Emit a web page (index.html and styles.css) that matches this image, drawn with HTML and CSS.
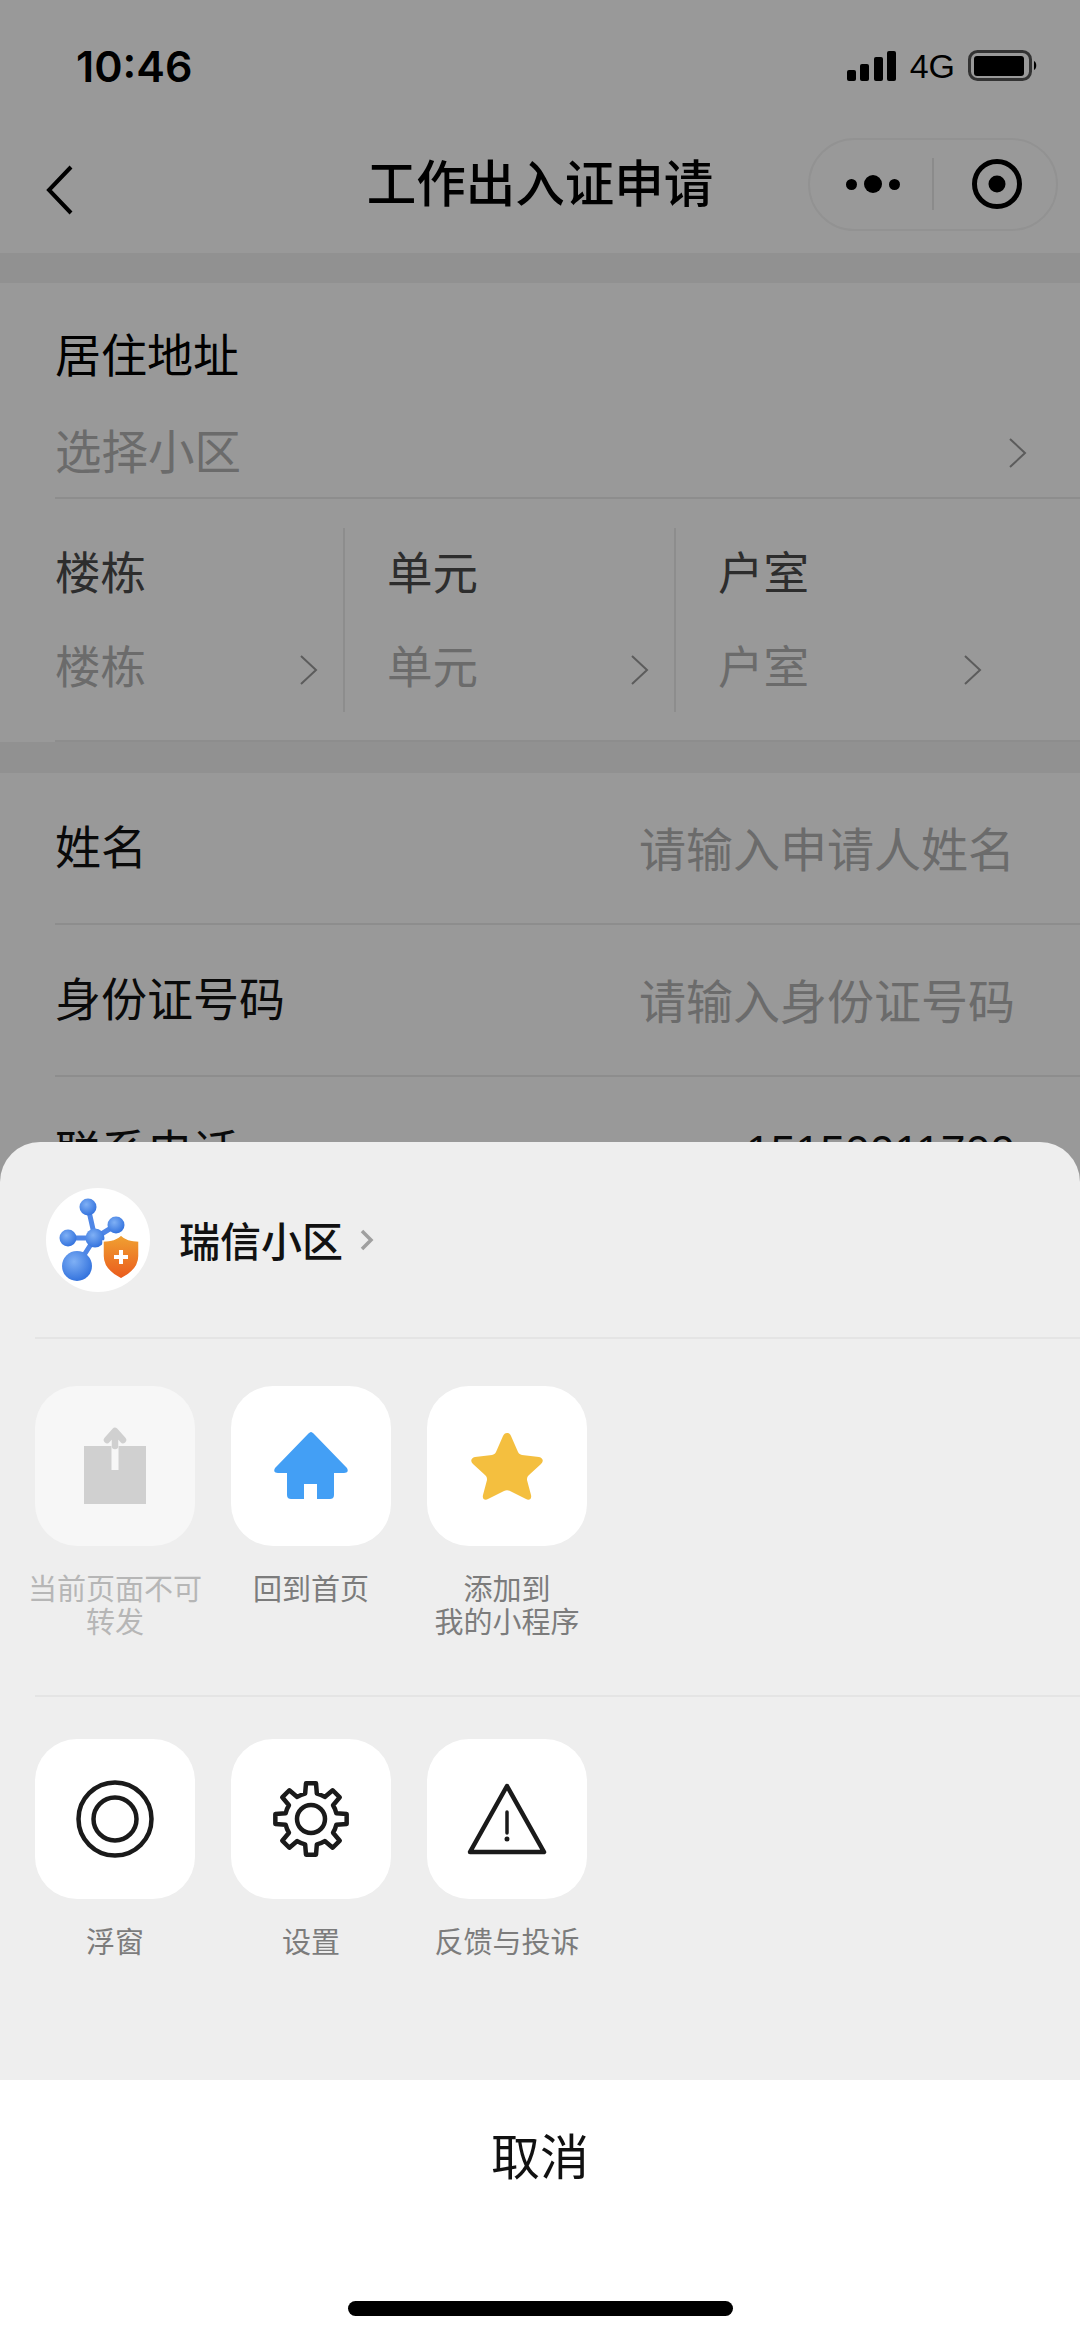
FILE: index.html

```html
<!DOCTYPE html>
<html>
<head>
  <meta charset="utf-8">
  <title>工作出入证申请</title>
  <link rel="stylesheet" href="styles.css">
</head>
<body>
  <div class="page">
    <div class="status">
      <span class="time">10:46</span>
      <div class="status-right">
        <svg class="signal" width="50" height="32" viewBox="0 0 50 32">
          <rect x="0" y="20" width="9" height="11" rx="2"/>
          <rect x="13" y="14" width="9" height="17" rx="2"/>
          <rect x="27" y="7" width="9" height="24" rx="2"/>
          <rect x="40" y="1" width="9" height="30" rx="2"/>
        </svg>
        <span class="net">4G</span>
        <svg class="battery" width="70" height="32" viewBox="0 0 70 32">
          <rect x="1.5" y="1.5" width="61" height="28" rx="8" fill="none" stroke="#555" stroke-width="3"/>
          <rect x="6" y="6" width="50" height="20" rx="3"/>
          <path d="M66 11 C69 12 69 19 66 20 Z"/>
        </svg>
      </div>
    </div>

    <div class="nav">
      <svg class="back" width="30" height="70" viewBox="0 0 30 70">
        <path d="M26 12 L4 35 L26 58" fill="none" stroke="#000" stroke-width="4"/>
      </svg>
      <div class="nav-title">工作出入证申请</div>
      <div class="capsule">
        <div class="capsule-dots"><i></i><i class="big"></i><i></i></div>
        <svg class="capsule-target" width="50" height="50" viewBox="0 0 50 50">
          <circle cx="25" cy="25" r="22.5" fill="none" stroke="#000" stroke-width="5"/>
          <circle cx="25" cy="25" r="8.5"/>
        </svg>
      </div>
    </div>

    <div class="band"></div>

    <div class="addr-title">居住地址</div>
    <div class="addr-select">
      <span class="ph">选择小区</span>
      <svg class="chev" width="20" height="32" viewBox="0 0 20 32"><path d="M2 2 L17 16 L2 30"/></svg>
    </div>

    <div class="units">
      <div class="unit">
        <div class="unit-label">楼栋</div>
        <div class="unit-value">
          <span class="ph">楼栋</span>
          <svg class="chev" width="20" height="32" viewBox="0 0 20 32"><path d="M2 2 L17 16 L2 30"/></svg>
        </div>
      </div>
      <div class="unit">
        <div class="unit-label">单元</div>
        <div class="unit-value">
          <span class="ph">单元</span>
          <svg class="chev" width="20" height="32" viewBox="0 0 20 32"><path d="M2 2 L17 16 L2 30"/></svg>
        </div>
      </div>
      <div class="unit last">
        <div class="unit-label">户室</div>
        <div class="unit-value">
          <span class="ph">户室</span>
          <svg class="chev" width="20" height="32" viewBox="0 0 20 32"><path d="M2 2 L17 16 L2 30"/></svg>
        </div>
      </div>
    </div>

    <div class="band band-2"></div>

    <div class="field"><span>姓名</span><span class="ph">请输入申请人姓名</span></div>
    <div class="field"><span>身份证号码</span><span class="ph">请输入身份证号码</span></div>
    <div class="field"><span>联系电话</span><span class="phone">15150011700</span></div>
  </div>

  <div class="scrim"></div>

  <div class="sheet">
    <div class="sheet-head">
      <svg class="logo" width="104" height="104" viewBox="0 0 104 104">
        <defs>
          <radialGradient id="ball" cx="40%" cy="35%" r="70%">
            <stop offset="0" stop-color="#7fb0f5"/>
            <stop offset="1" stop-color="#2f6fdc"/>
          </radialGradient>
          <linearGradient id="shield" x1="0" y1="0" x2="0" y2="1">
            <stop offset="0" stop-color="#f0a232"/>
            <stop offset="1" stop-color="#ea5a1c"/>
          </linearGradient>
        </defs>
        <circle cx="52" cy="52" r="52" fill="#fff"/>
        <path d="M42 19 L49 50 M70 37 L49 50 M22 50 L49 50 M31 78 L49 50" stroke="#4f86e6" stroke-width="5" fill="none"/>
        <circle cx="42" cy="19" r="8.5" fill="url(#ball)"/>
        <circle cx="70" cy="37" r="8.5" fill="url(#ball)"/>
        <circle cx="22" cy="50" r="8.5" fill="url(#ball)"/>
        <circle cx="49" cy="50" r="9.5" fill="url(#ball)"/>
        <circle cx="31" cy="78" r="15" fill="url(#ball)"/>
        <path d="M75 47 C80 52 87 53 93 53 L93 68 C93 78 85 86 75 91 C65 86 57 78 57 68 L57 53 C63 53 70 52 75 47 Z" fill="url(#shield)" stroke="#fff" stroke-width="1.5"/>
        <path d="M75 62 L75 76 M68 69 L82 69" stroke="#fff" stroke-width="4" fill="none"/>
      </svg>
      <span class="sheet-name">瑞信小区</span>
      <svg class="sheet-chev" width="14" height="22" viewBox="0 0 14 22"><path d="M2 2 L11 11 L2 20"/></svg>
    </div>

    <div class="sheet-row first">
      <div class="item off">
        <div class="tile">
          <svg width="70" height="84" viewBox="0 0 70 84">
            <path d="M4 22 H66 V80 H4 Z" fill="#d0d0d0"/>
            <rect x="31.5" y="22" width="7" height="24" fill="#f7f7f7"/>
            <path d="M35 8 V22 M27 16 L35 7 L43 16" fill="none" stroke="#d0d0d0" stroke-width="6.5" stroke-linejoin="round" stroke-linecap="round"/>
          </svg>
        </div>
        <div class="item-label">当前页面不可<br>转发</div>
      </div>
      <div class="item">
        <div class="tile">
          <svg width="76" height="70" viewBox="0 0 76 70">
            <path d="M38 1 C39 1 40 2 41 3 L73 36 C76 39 75 42 71 42 L61 42 V64 C61 67 59 68 57 68 H44 V53 H31 V68 H18 C16 68 14 67 14 64 V42 L5 42 C1 42 0 39 3 36 L35 3 C36 2 37 1 38 1 Z" fill="#439ff5"/>
          </svg>
        </div>
        <div class="item-label">回到首页</div>
      </div>
      <div class="item">
        <div class="tile">
          <svg width="74" height="70" viewBox="0 0 74 70">
            <path d="M37 2 C39 2 40 3 41 5 L48 21 C49 23 50 23 52 24 L69 26 C73 27 74 30 71 33 L59 44 C57 46 57 47 57 49 L61 64 C62 68 59 70 56 68 L40 60 C38 59 36 59 34 60 L18 68 C15 70 12 68 13 64 L17 49 C17 47 17 46 15 44 L3 33 C0 30 1 27 5 26 L22 24 C24 23 25 23 26 21 L33 5 C34 3 35 2 37 2 Z" fill="#f4bf3f"/>
          </svg>
        </div>
        <div class="item-label">添加到<br>我的小程序</div>
      </div>
    </div>

    <div class="sheet-row">
      <div class="item">
        <div class="tile">
          <svg width="80" height="80" viewBox="0 0 80 80" class="line-icon">
            <circle cx="40" cy="40" r="36.5"/>
            <circle cx="40" cy="40" r="21.5"/>
          </svg>
        </div>
        <div class="item-label">浮窗</div>
      </div>
      <div class="item">
        <div class="tile">
          <svg width="80" height="80" viewBox="-40 -40 80 80" class="line-icon">
            <path d="M-5.85 -25.33 L-5.01 -35.65 H5.01 L5.85 -25.33 A26 26 0 0 1 13.78 -22.05 L21.67 -28.75 L28.75 -21.67 L22.05 -13.78 A26 26 0 0 1 25.33 -5.85 L35.65 -5.01 V5.01 L25.33 5.85 A26 26 0 0 1 22.05 13.78 L28.75 21.67 L21.67 28.75 L13.78 22.05 A26 26 0 0 1 5.85 25.33 L5.01 35.65 H-5.01 L-5.85 25.33 A26 26 0 0 1 -13.78 22.05 L-21.67 28.75 L-28.75 21.67 L-22.05 13.78 A26 26 0 0 1 -25.33 5.85 L-35.65 5.01 V-5.01 L-25.33 -5.85 A26 26 0 0 1 -22.05 -13.78 L-28.75 -21.67 L-21.67 -28.75 L-13.78 -22.05 A26 26 0 0 1 -5.85 -25.33 Z"/>
            <circle cx="0" cy="0" r="14"/>
          </svg>
        </div>
        <div class="item-label">设置</div>
      </div>
      <div class="item">
        <div class="tile">
          <svg width="80" height="72" viewBox="0 0 80 72" class="line-icon">
            <path d="M40 3 L77 69 H3 Z"/>
            <path d="M40 29 V50" stroke-width="3.5"/>
            <circle cx="40" cy="56" r="2.5" fill="#1a1a1a" stroke="none"/>
          </svg>
        </div>
        <div class="item-label">反馈与投诉</div>
      </div>
    </div>

    <div class="cancel-wrap">
      <div class="cancel">取消</div>
      <div class="home-bar"></div>
    </div>
  </div>
</body>
</html>
```

FILE: styles.css

```css
* { box-sizing: border-box; }
html, body { margin: 0; padding: 0; }
body { position: relative; width: 1080px; height: 2339px; overflow: hidden; background: #fff; color: #000; font-family: "Noto Sans CJK SC", "Noto Sans", sans-serif; }

.page { width: 1080px; }
.ph { color: #b2b2b2; }

.status { height: 132px; display: flex; align-items: center; justify-content: space-between; padding: 0 42px 0 76px; }
.time { font-family: Inter, Roboto, sans-serif; font-size: 43px; font-weight: 600; }
.status-right { display: flex; align-items: center; }
.signal { margin-right: 13px; }
.net { font-family: "Liberation Sans", sans-serif; font-size: 34px; margin-right: 13px; }

.nav { height: 121px; display: grid; grid-template-columns: 1fr auto 1fr; align-items: center; padding-bottom: 17px; }
.back { margin: 12px 0 0 45px; }
.nav-title { font-size: 49.5px; font-weight: 500; line-height: 60px; padding-bottom: 6px; }
.capsule { justify-self: end; margin-right: 22px; width: 250px; height: 93px; border: 2px solid #f4f4f4; border-radius: 47px; display: grid; grid-template-columns: 124px 1fr; align-items: center; justify-items: center; }
.capsule-dots { display: flex; align-items: center; gap: 7px; height: 52px; width: 100%; padding-left: 4px; justify-content: center; border-right: 2px solid #e8e8e8; }
.capsule-dots i { width: 11px; height: 11px; border-radius: 50%; background: #000; }
.capsule-dots i.big { width: 18px; height: 18px; }
.capsule-target { margin-left: 3px; }

.band { height: 30px; background: #f2f2f2; }
.band-2 { height: 31px; }

.addr-title { height: 144px; padding-left: 55px; font-size: 46px; line-height: 138px; }
.addr-select { height: 72px; margin-left: 55px; padding: 0 52px 28px 0; border-bottom: 2px solid #ececec; display: flex; align-items: center; justify-content: space-between; font-size: 46.5px; }
.chev { fill: none; stroke: #999; stroke-width: 2; flex-shrink: 0; margin-top: 10px; }

.units { height: 243px; margin-left: 55px; padding-top: 29px; border-bottom: 2px solid #ececec; display: grid; grid-template-columns: 290px 331px 331px; align-items: start; }
.unit { height: 184px; padding-left: 42px; padding-right: 24px; border-right: 2px solid #ececec; }
.unit:first-child { padding-left: 0; }
.unit.last { border-right: none; }
.unit-label { height: 84px; line-height: 84px; font-size: 45.5px; color: #4c4c4c; white-space: nowrap; }
.unit-value { height: 76px; margin-top: 14px; display: flex; align-items: center; justify-content: space-between; font-size: 45.5px; white-space: nowrap; }
.unit-value .chev { margin-top: 12px; }

.field { height: 152px; margin-left: 55px; padding: 0 65px 8px 0; border-bottom: 2px solid #ececec; display: flex; align-items: center; justify-content: space-between; font-size: 46px; color: #111; }
.field .ph { font-size: 47px; padding-top: 4px; }
.phone { font-family: "Liberation Sans", sans-serif; font-size: 44.5px; padding-top: 8px; }

.scrim { position: absolute; inset: 0; background: rgba(0, 0, 0, 0.4); }

.sheet { position: absolute; left: 0; right: 0; top: 1142px; bottom: 0; background: #eee; border-radius: 40px 40px 0 0; display: flex; flex-direction: column; overflow: hidden; }
.sheet-head { height: 197px; margin-left: 35px; padding-left: 11px; border-bottom: 2px solid #e4e4e4; display: flex; align-items: center; flex-shrink: 0; }
.sheet-name { margin-left: 29px; font-size: 41px; font-weight: 500; color: #111; padding-bottom: 2px; }
.sheet-chev { margin-left: 17px; fill: none; stroke: #a0a0a0; stroke-width: 3.5; }

.sheet-row { flex: 1; margin-left: 35px; padding-top: 42px; display: flex; gap: 36px; align-items: flex-start; }
.sheet-row.first { flex: none; height: 358px; padding-top: 47px; border-bottom: 2px solid #e4e4e4; }
.item { width: 160px; display: flex; flex-direction: column; align-items: center; }
.tile { width: 160px; height: 160px; border-radius: 42px; background: #fff; display: flex; align-items: center; justify-content: center; }
.item-label { margin-top: 25px; font-size: 29px; line-height: 33px; color: #7c7c7c; text-align: center; white-space: nowrap; }
.item.off .tile { background: #f7f7f7; }
.item.off .item-label { color: #b6b6b6; }
.line-icon { fill: none; stroke: #1a1a1a; stroke-width: 4.5; stroke-linejoin: round; stroke-linecap: round; }

.cancel-wrap { height: 259px; background: #fff; display: flex; flex-direction: column; align-items: center; flex-shrink: 0; }
.cancel { height: 148px; line-height: 148px; font-size: 49px; color: #111; }
.home-bar { width: 385px; height: 15px; margin-top: 73px; background: #000; border-radius: 8px; }
```
